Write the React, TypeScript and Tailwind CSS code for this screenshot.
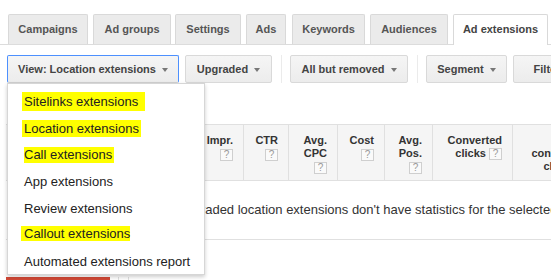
import React from "react";

const tabs = [
  { label: "Campaigns", w: "w-[80px]", ml: "" },
  { label: "Ad groups", w: "w-[78px]", ml: "ml-[5px]" },
  { label: "Settings", w: "w-[66px]", ml: "ml-[4px]" },
  { label: "Ads", w: "w-[40px]", ml: "ml-[5px]" },
  { label: "Keywords", w: "w-[73px]", ml: "ml-[6px]" },
  { label: "Audiences", w: "w-[78px]", ml: "ml-[5px]" },
];

function Caret() {
  return (
    <span className="inline-block w-0 h-0 border-x-[3.5px] border-x-transparent border-t-[4px] border-t-[#777] ml-[6px] mt-[1px]" />
  );
}

function Btn({ label, cls, active }: { label: string; cls: string; active?: boolean }) {
  return (
    <div
      className={`${cls} h-[28px] shrink-0 flex items-center justify-center rounded-[2px] border bg-linear-to-b from-[#f5f5f5] to-[#ececec] text-[11px] font-bold text-[#444] whitespace-nowrap ${
        active ? "border-[#4d90fe] border-b-[#d0d0d0]" : "border-[#d9d9d9]"
      }`}
    >
      <span>{label}</span>
      <Caret />
    </div>
  );
}

function Help() {
  return (
    <span className="inline-flex items-center justify-center w-[13px] h-[12px] border border-[#cfcfcf] bg-[#fafafa] text-[10px] font-normal text-[#999] leading-none align-middle">
      ?
    </span>
  );
}

function Col({ w, children }: { w: string; children: React.ReactNode }) {
  return (
    <div className={`${w} shrink-0 h-full border-r border-[#e0e0e0] pr-[10px] pt-[9px] text-right leading-[13px]`}>
      {children}
    </div>
  );
}

const menuItems: { label: string; hl?: string }[] = [
  { label: "Sitelinks extensions", hl: "h-[19px] leading-[19px] pl-[2px] ml-[-2px] pr-[7px]" },
  { label: "Location extensions", hl: "h-[17px] leading-[17px] pl-[2px] ml-[-2px] pr-[2px]" },
  { label: "Call extensions", hl: "h-[16px] leading-[16px] pr-[2px]" },
  { label: "App extensions" },
  { label: "Review extensions" },
  { label: "Callout extensions", hl: "h-[15px] leading-[15px] pl-[3px] ml-[-3px] mt-[-4px]" },
  { label: "Automated extensions report" },
];

export default function App() {
  return (
    <div
      className="relative w-[551px] h-[280px] overflow-hidden bg-white"
      style={{ fontFamily: '"Liberation Sans", Arial, sans-serif' }}
    >
      {/* Tabs */}
      <div className="flex items-end pl-[8px] pt-[14px] h-[45px] border-b border-[#dcdcdc]">
        {tabs.map((t) => (
          <div
            key={t.label}
            className={`${t.w} ${t.ml} h-[30px] shrink-0 flex items-center justify-center bg-[#ebebeb] border border-b-0 border-[#d9d9d9] rounded-t-[2px] text-[11px] font-bold text-[#555] whitespace-nowrap`}
          >
            {t.label}
          </div>
        ))}
        <div className="w-[95px] ml-[5px] h-[31px] mb-[-1px] shrink-0 flex items-center justify-center bg-white border border-b-0 border-[#d9d9d9] rounded-t-[2px] text-[11px] font-bold text-[#444] whitespace-nowrap pb-[1px]">
          Ad extensions
        </div>
      </div>

      {/* Toolbar */}
      <div className="flex items-center mt-[10px] pl-[7px]">
        <Btn label="View: Location extensions" cls="w-[172px]" active />
        <Btn label="Upgraded" cls="w-[87px] ml-[6px]" />
        <div className="w-px h-[28px] bg-[#ebebeb] ml-[9px] shrink-0" />
        <Btn label="All but removed" cls="w-[118px] ml-[8px]" />
        <div className="w-px h-[28px] bg-[#ebebeb] ml-[9px] shrink-0" />
        <Btn label="Segment" cls="w-[81px] ml-[8px]" />
        <Btn label="Filter" cls="w-[80px] ml-[6px]" />
      </div>

      {/* Table */}
      <div className="ml-[6px] mt-[41px] w-[600px]">
        <div className="flex h-[57px] bg-[#f5f5f5] border-y border-[#e0e0e0] text-[11px] font-bold text-[#333]">
          <div className="w-[194px] shrink-0" />
          <Col w="w-[44px]">
            <div>Impr.</div>
            <div className="mt-[1px]"><Help /></div>
          </Col>
          <Col w="w-[45px]">
            <div>CTR</div>
            <div className="mt-[1px]"><Help /></div>
          </Col>
          <Col w="w-[49px]">
            <div>Avg.</div>
            <div>CPC</div>
            <div className="mt-[1px]"><Help /></div>
          </Col>
          <Col w="w-[47px]">
            <div>Cost</div>
            <div className="mt-[1px]"><Help /></div>
          </Col>
          <Col w="w-[48px]">
            <div>Avg.</div>
            <div>Pos.</div>
            <div className="mt-[1px]"><Help /></div>
          </Col>
          <Col w="w-[80px]">
            <div>Converted</div>
            <div>clicks <Help /></div>
          </Col>
          <Col w="w-[82px]">
            <div>Cost /</div>
            <div>converted</div>
            <div>click <Help /></div>
          </Col>
        </div>
        <div className="h-[59px] border-b border-[#e0e0e0] flex items-center pl-[171px] text-[13px] text-[#333] whitespace-nowrap">
          Upgraded location extensions don't have statistics for the selected date range.
        </div>
      </div>

      {/* Bottom strip */}
      <div className="flex items-start mt-[37px] ml-[6px] h-[10px]">
        <div className="w-[104px] h-[10px] bg-[#d14836]" />
        <div className="w-px h-[10px] bg-[#e0e0e0] ml-[8px]" />
        <div className="w-px h-[10px] bg-[#e0e0e0] ml-[9px]" />
      </div>

      {/* Dropdown menu */}
      <div className="absolute left-[7px] top-[83px] w-[198px] h-[192px] bg-white border border-[#d6d6d6] shadow-[0_2px_4px_rgba(0,0,0,0.2)] pt-[4px] z-10">
        {menuItems.map((m) => (
          <div key={m.label} className="h-[26.8px] flex items-center pl-[16px] text-[13px] text-[#222] whitespace-nowrap">
            {m.hl ? (
              <span className={`inline-block bg-[#ffff00] ${m.hl}`}>{m.label}</span>
            ) : (
              <span>{m.label}</span>
            )}
          </div>
        ))}
      </div>
    </div>
  );
}
